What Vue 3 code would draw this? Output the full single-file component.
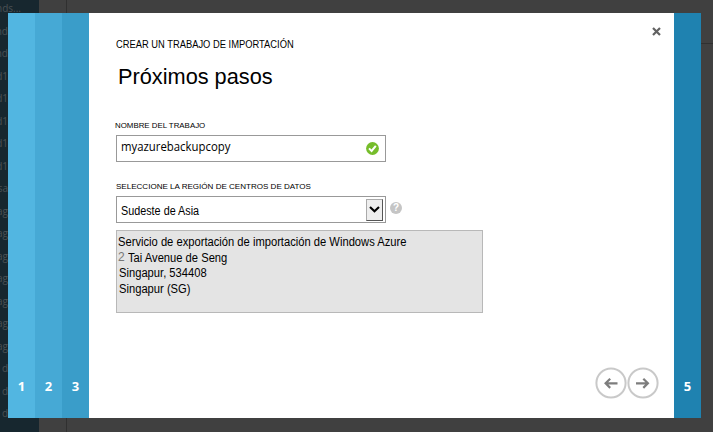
<script setup>
const rows = ['nds...', 'nd', 'nd', 'd1', 'd1', 'd1', 'd1', 'd1', 'sa', 'ag', 'ag', 'ag', 'ag', 'ag', 'ag', 'ag', 'd', 'd', 'd', 'l']
const steps = [1, 2, 3]
</script>

<template>
  <div class="page">
    <aside class="sidebar">
      <div v-for="(row, i) in rows" :key="i" class="side-row" :class="{ wide: i === 0 }">{{ row }}</div>
    </aside>
    <main class="backdrop"><div class="gutter"></div><div class="rule"></div></main>

    <div class="dialog">
      <div v-for="step in steps" :key="step" class="step" :class="'step-' + step">{{ step }}</div>
      <section class="panel">
        <div class="body">
          <div class="eyebrow"><span>CREAR UN TRABAJO DE IMPORTACIÓN</span></div>
          <h1><span>Próximos pasos</span></h1>
          <label class="label name-label"><span>NOMBRE DEL TRABAJO</span></label>
          <div class="field">
            <span class="name-value">myazurebackupcopy</span>
            <svg class="check" width="13" height="13" viewBox="0 0 13 13">
              <circle cx="6.5" cy="6.5" r="6.4" fill="#76bd2b" />
              <path d="M3 6.4 5.6 9 9.8 3.9" fill="none" stroke="#fff" stroke-width="2" />
            </svg>
          </div>
          <label class="label region-label"><span>SELECCIONE LA REGIÓN DE CENTROS DE DATOS</span></label>
          <div class="region-row">
            <div class="field select">
              <span class="region-value">Sudeste de Asia</span>
              <div class="drop">
                <svg width="11" height="8" viewBox="0 0 11 8"><path d="M1 1 5.5 5.3 10 1" fill="none" stroke="#000" stroke-width="2.1" /></svg>
              </div>
            </div>
            <div class="help">?</div>
          </div>
          <div class="address">
            <div class="line l1"><span>Servicio de exportación de importación de Windows Azure</span></div>
            <div class="line l2"><i>2</i><span>Tai Avenue de Seng</span></div>
            <div class="line l3"><span>Singapur, 534408</span></div>
            <div class="line l4"><span>Singapur (SG)</span></div>
          </div>
        </div>
        <div class="side">
          <svg class="close" width="9" height="9" viewBox="0 0 9 9"><path d="M1 1 8 8M8 1 1 8" stroke="#626262" stroke-width="2.2" /></svg>
          <div class="nav">
            <svg width="32" height="32" viewBox="0 0 32 32">
              <circle cx="16" cy="16" r="14.6" fill="#fff" stroke="#c9c9c9" stroke-width="2" />
              <path d="M22.5 16.3H11M15.2 11.7 10.6 16.3 15.2 20.9" fill="none" stroke="#7d7d7d" stroke-width="2.2" />
            </svg>
            <svg width="32" height="32" viewBox="0 0 32 32">
              <circle cx="16" cy="16" r="14.6" fill="#fff" stroke="#c9c9c9" stroke-width="2" />
              <path d="M9 16.3H20.5M16.3 11.7 20.9 16.3 16.3 20.9" fill="none" stroke="#7d7d7d" stroke-width="2.2" />
            </svg>
          </div>
        </div>
      </section>
      <div class="step step-5">5</div>
    </div>
  </div>
</template>

<style>
body { margin: 0; overflow: hidden; }
</style>

<style scoped>
* { box-sizing: border-box; }
.page { position: relative; width: 713px; height: 432px; display: flex; overflow: hidden; background: #404040; font-family: "Liberation Sans", sans-serif; color: #000; }
.sidebar { width: 39px; height: 432px; background: #17272f; overflow: hidden; }
.side-row { height: 22.5px; width: 8px; font: 10px/16px "Open Sans", sans-serif; color: #4b5154; display: flex; justify-content: flex-end; white-space: nowrap; }
.side-row.wide { width: 21px; }
.backdrop { flex: 1; display: flex; }
.gutter { width: 28px; border-right: 1px solid #303030; }
.rule { flex: 1; height: 44px; border-bottom: 1px solid #303030; }
.dialog { position: absolute; left: 8px; top: 13px; width: 693px; height: 405px; display: flex; background: #fff; }
.step { width: 27px; padding-bottom: 22px; display: flex; align-items: flex-end; justify-content: center; color: #fff; font: bold 13px/20px "Open Sans", sans-serif; }
.step-1 { background: #52b6e1; }
.step-2 { background: #46a9d5; }
.step-3 { background: #3a9dc9; }
.step-5 { background: #1f82b0; }
.panel { flex: 1; display: flex; justify-content: space-between; padding-left: 26px; }
.body { width: 400px; }
.body span { display: inline-block; white-space: nowrap; transform-origin: 0 50%; }
.eyebrow { margin: 25px 0 0 1px; height: 14px; font-size: 10px; line-height: 14px; }
.eyebrow span { transform: scaleX(.935); }
h1 { margin: 11px 0 0 3px; height: 28px; font-size: 22px; line-height: 28px; font-weight: 400; }
h1 span { transform: scaleX(.988); }
.label { display: block; height: 12px; font-size: 8px; line-height: 12px; }
.name-label { margin-top: 29px; }
.name-label span { transform: scaleX(.985); }
.region-label { margin: 19px 0 0 1px; }
.region-label span { transform: scaleX(1.005); }
.field { margin: 3px 0 0 1px; width: 270px; height: 27px; border: 1px solid #999; display: flex; align-items: center; justify-content: space-between; padding: 0 6px 0 4px; }
.name-value { font: 12px/18px "Open Sans", sans-serif; margin-top: -3px; transform: scaleX(.947); }
.region-row { display: flex; align-items: center; }
.select { padding-right: 2px; }
.region-value { font-size: 12px; margin-top: 3px; transform: scaleX(.9); }
.drop { width: 17px; height: 22px; border: 1px solid #aaa; border-right: 1px solid #555; border-bottom: 1px solid #555; background: #eee; display: flex; align-items: center; justify-content: center; }
.help { margin: 0 0 0 4px; width: 12px; height: 12px; border-radius: 50%; background: #c5c5c5; color: #fff; font-size: 10px; line-height: 12px; font-weight: 700; text-align: center; }
.address { margin: 7px 0 0 1px; width: 367px; height: 83px; border: 1px solid #b8b8b8; background: #e4e4e4; padding: 4px 0 0 1px; font-size: 12px; }
.address span { transform: scaleX(.932); }
.line { height: 15.7px; line-height: 15.7px; white-space: nowrap; display: flex; }
.l2 i { font-style: normal; color: #777; width: 10px; margin-top: -1px; }
.l3, .l4 { padding-left: 1px; }
.side { display: flex; flex-direction: column; justify-content: space-between; align-items: flex-end; }
.close { margin: 14px 13px 0 0; }
.nav { display: flex; margin: 0 15px 19px 0; }
</style>
